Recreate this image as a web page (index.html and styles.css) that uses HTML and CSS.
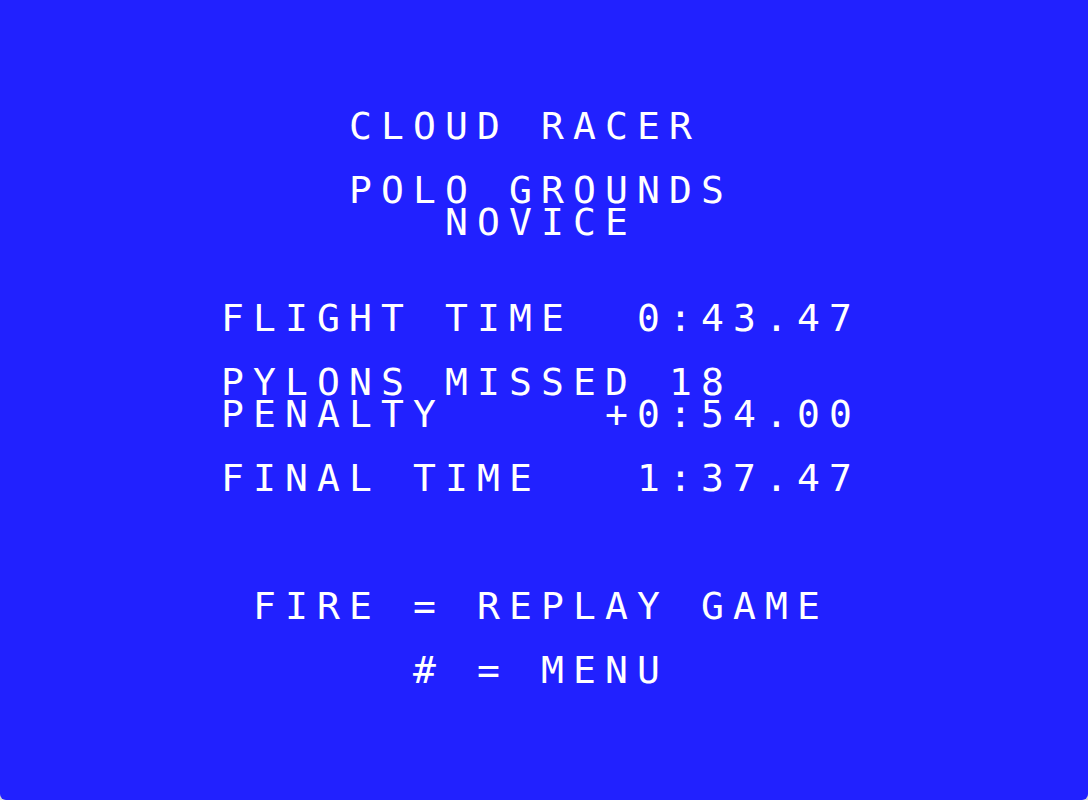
FILE: index.html
```html
<!DOCTYPE html>
<html lang="en">
<head>
<meta charset="utf-8">
<title>Cloud Racer</title>
<link rel="stylesheet" href="styles.css">
</head>
<body>
<main class="screen">
  <div class="line c11">CLOUD RACER</div>
  <div class="line c11 gap1">POLO GROUNDS</div>
  <div class="line c14">NOVICE</div>
  <div class="line c7 gap2">FLIGHT TIME  0:43.47</div>
  <div class="line c7 gap1">PYLONS MISSED 18</div>
  <div class="line c7">PENALTY     +0:54.00</div>
  <div class="line c7 gap1">FINAL TIME   1:37.47</div>
  <div class="line c8 gap3">FIRE = REPLAY GAME</div>
  <div class="line c13 gap1"># = MENU</div>
</main>
</body>
</html>
```

FILE: styles.css
```css
html, body {
  margin: 0;
  padding: 0;
  background: #d8d8d8;
}

.screen {
  box-sizing: border-box;
  width: 1088px;
  height: 800px;
  padding-top: 110px;
  background: #2121ff;
  border-radius: 0 0 6px 6px;
  color: #ffffff;
  font-family: "DejaVu Sans Mono", "Liberation Mono", monospace;
  font-size: 38px;
  line-height: 32px;
  letter-spacing: 9.12px;
  overflow: hidden;
}

.line {
  height: 32px;
  white-space: pre;
  padding-left: calc(var(--c) * 32px - 3px);
}

.c7 { --c: 7; }
.c8 { --c: 8; }
.c11 { --c: 11; }
.c13 { --c: 13; }
.c14 { --c: 14; }

.gap1 { margin-top: 32px; }
.gap2 { margin-top: 64px; }
.gap3 { margin-top: 96px; }
```
